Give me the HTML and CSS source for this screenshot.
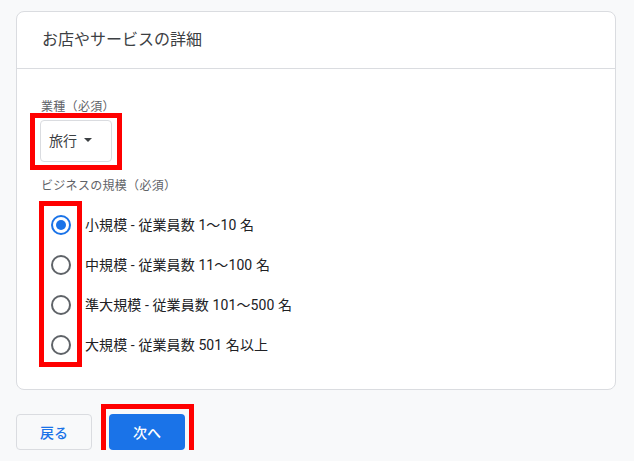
FILE: index.html
```html
<!DOCTYPE html>
<html lang="ja">
<head>
<meta charset="utf-8">
<title>お店やサービスの詳細</title>
<link rel="stylesheet" href="styles.css">
</head>
<body>
<main class="page">
  <section class="card">
    <header class="card-header">
      <h2 class="card-title">お店やサービスの詳細</h2>
    </header>
    <div class="card-body">
      <div class="field-label">業種（必須）</div>
      <div class="select-wrap hl hl-select">
        <button class="select" type="button">
          <span>旅行</span>
          <svg class="caret" width="10" height="5" viewBox="0 0 10 5" aria-hidden="true"><path d="M0 0h10L5 5z" fill="#3c4043"/></svg>
        </button>
      </div>
      <div class="field-label size-label">ビジネスの規模（必須）</div>
      <div class="radio-list hl hl-radios">
        <label class="radio-row">
          <span class="radio-control"><span class="radio checked"><span class="dot"></span></span></span>
          <span class="radio-text">小規模 - 従業員数 1〜10 名</span>
        </label>
        <label class="radio-row">
          <span class="radio-control"><span class="radio"></span></span>
          <span class="radio-text">中規模 - 従業員数 11〜100 名</span>
        </label>
        <label class="radio-row">
          <span class="radio-control"><span class="radio"></span></span>
          <span class="radio-text">準大規模 - 従業員数 101〜500 名</span>
        </label>
        <label class="radio-row">
          <span class="radio-control"><span class="radio"></span></span>
          <span class="radio-text">大規模 - 従業員数 501 名以上</span>
        </label>
      </div>
    </div>
  </section>
  <div class="actions">
    <button class="btn btn-outline" type="button">戻る</button>
    <span class="hl hl-next"><button class="btn btn-primary" type="button">次へ</button></span>
  </div>
</main>
</body>
</html>
```

FILE: styles.css
```css
html, body {
  margin: 0;
  background: #f8f9fa;
  font-family: Roboto, "Noto Sans CJK JP", sans-serif;
}

.page {
  padding: 11px 0 0 16px;
}

.card {
  width: 600px;
  box-sizing: border-box;
  background: #fff;
  border: 1px solid #dadce0;
  border-radius: 8px;
}

.card-header {
  height: 56px;
  border-bottom: 1px solid #dadce0;
  display: flex;
  align-items: center;
  padding-left: 25px;
}

.card-title {
  margin: 0;
  font-size: 16px;
  font-weight: 400;
  line-height: 24px;
  color: #3c4043;
}

.card-body {
  padding: 30px 24px 24px;
}

.field-label {
  font-size: 12px;
  line-height: 16px;
  color: #5f6368;
  letter-spacing: 0.3px;
}

.select-wrap {
  margin-top: 5px;
  margin-left: -1px;
  width: 72px;
}

.select {
  display: flex;
  align-items: center;
  width: 72px;
  height: 42px;
  box-sizing: border-box;
  padding: 0 0 3px 8px;
  border: 1px solid #dadce0;
  border-radius: 4px;
  background: #fff;
  font-family: inherit;
  font-size: 14px;
  color: #3c4043;
}

.caret {
  margin-left: 7px;
  width: 8px;
  height: 4px;
}

.size-label {
  margin-top: 16px;
}

.radio-list {
  margin-top: 11px;
}

.radio-row {
  display: flex;
  align-items: center;
  height: 40px;
}

.radio-control {
  width: 40px;
  height: 40px;
  display: flex;
  align-items: center;
  justify-content: center;
}

.radio {
  width: 20px;
  height: 20px;
  box-sizing: border-box;
  border: 2px solid #5f6368;
  border-radius: 50%;
  display: flex;
  align-items: center;
  justify-content: center;
}

.radio.checked {
  border-color: #1a73e8;
}

.dot {
  width: 10px;
  height: 10px;
  border-radius: 50%;
  background: #1a73e8;
}

.radio-text {
  margin-left: 4px;
  font-size: 14px;
  line-height: 20px;
  color: #202124;
  letter-spacing: 0.1px;
}

.actions {
  display: flex;
  gap: 17px;
  margin-top: 24px;
}

.btn {
  width: 76px;
  height: 36px;
  box-sizing: border-box;
  border-radius: 4px;
  font-family: inherit;
  font-size: 14px;
  font-weight: 500;
  padding: 0;
}

.btn-outline {
  background: transparent;
  border: 1px solid #dadce0;
  color: #1a73e8;
}

.btn-primary {
  background: #1a73e8;
  border: none;
  color: #fff;
}

.hl {
  position: relative;
}

.hl::after {
  content: "";
  position: absolute;
  box-sizing: border-box;
  border: 5px solid #ff0000;
  pointer-events: none;
}

.hl-select::after {
  top: -7px;
  left: -10px;
  right: -10px;
  bottom: -8px;
}

.hl-radios::after {
  top: -4px;
  left: -2px;
  width: 43px;
  bottom: -2px;
}

.hl-next {
  display: flex;
}

.hl-next::after {
  top: -10px;
  left: -8px;
  right: -9px;
  bottom: -8px;
}
```
